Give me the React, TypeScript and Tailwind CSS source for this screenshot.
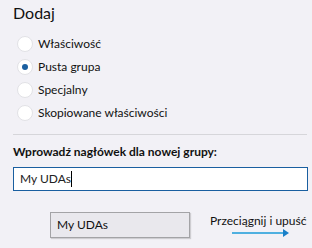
import React from "react";

const Radio = ({ label, checked }: { label: string; checked?: boolean }) => (
  <div className="flex items-center h-[23px]">
    <div className="w-[16px] h-[16px] rounded-full bg-white border border-[#e2e2e6] flex items-center justify-center ml-[4px]">
      {checked && <div className="w-[6px] h-[6px] rounded-full bg-[#1a5fa0]" />}
    </div>
    <span className="ml-[5px] text-[12px] text-[#111]">{label}</span>
  </div>
);

export default function App() {
  return (
    <div
      className="w-[312px] h-[248px] bg-[#f2f1f6] overflow-hidden pl-[13px] pr-[4px]"
      style={{ fontFamily: 'Lato, "Noto Sans", sans-serif' }}
    >
      <div className="pt-[3px] h-[32px] text-[16px] text-[#111] leading-[20px]">Dodaj</div>
      <div className="flex flex-col">
        <Radio label="Właściwość" />
        <Radio label="Pusta grupa" checked />
        <Radio label="Specjalny" />
        <Radio label="Skopiowane właściwości" />
      </div>
      <div className="mt-[10px] h-px bg-[#d6d6da] mr-[1px]" />
      <div className="mt-[9px] text-[12px] font-bold text-[#111] leading-[16px]">
        Wprowadź nagłówek dla nowej grupy:
      </div>
      <div className="mt-[7px] h-[24px] bg-white border border-[#1a5fa0] flex items-center pl-[6px] text-[12px] text-[#222]">
        <span>My UDAs</span>
        <span className="w-px h-[16px] bg-black" />
      </div>
      <div className="mt-[21px] flex items-start">
        <div className="ml-[37px] w-[140px] h-[26px] bg-[#e9e8ed] border border-[#a3a3a6] shadow-[1px_1px_1px_rgba(0,0,0,0.15)] flex items-center pl-[6px] text-[12px] text-[#111]">
          My UDAs
        </div>
        <div className="ml-[20px] mt-[1px] flex flex-col items-start">
          <span className="text-[12px] text-[#111] leading-[16px] whitespace-nowrap">Przeciągnij i upuść</span>
          <svg width="58" height="8" viewBox="0 0 58 8" className="ml-[22px] mt-[0px]">
            <line x1="0" y1="4" x2="52" y2="4" stroke="#4fb0e0" strokeWidth="2" />
            <polygon points="51,0 57,4 51,8" fill="#1a7fc8" />
          </svg>
        </div>
      </div>
    </div>
  );
}
